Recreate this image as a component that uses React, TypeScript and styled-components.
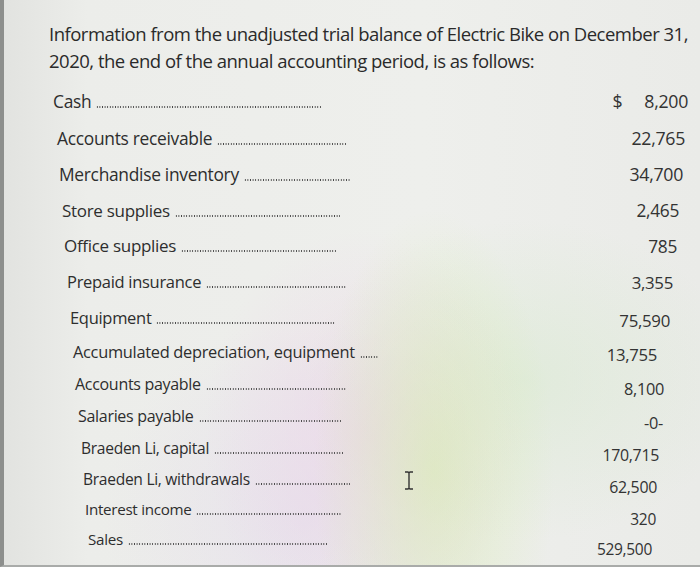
import { FC } from 'react';
import styled, { createGlobalStyle } from 'styled-components';

interface IEntry {
    name: string;
    amount: string;
    indent: number;
    size: number;
    height: number;
    dotsEnd: number;
    right: number;
    drop: number;
    dollar?: boolean;
}

const entries: IEntry[] = [
    { name: 'Cash', amount: '8,200', indent: 53, size: 17.4, height: 37, dotsEnd: 322, right: 688, drop: 0, dollar: true },
    { name: 'Accounts receivable', amount: '22,765', indent: 57, size: 17.4, height: 37, dotsEnd: 346, right: 685, drop: 0 },
    { name: 'Merchandise inventory', amount: '34,700', indent: 59, size: 17.4, height: 36, dotsEnd: 350, right: 683, drop: 0 },
    { name: 'Store supplies', amount: '2,465', indent: 62, size: 17, height: 36, dotsEnd: 340, right: 679, drop: 0 },
    { name: 'Office supplies', amount: '785', indent: 64, size: 17, height: 35, dotsEnd: 337, right: 677, drop: 0 },
    { name: 'Prepaid insurance', amount: '3,355', indent: 67, size: 16.5, height: 36, dotsEnd: 346, right: 673, drop: 1 },
    { name: 'Equipment', amount: '75,590', indent: 70, size: 16.5, height: 36, dotsEnd: 335, right: 670, drop: 3 },
    { name: 'Accumulated depreciation, equipment', amount: '13,755', indent: 73, size: 16.4, height: 33, dotsEnd: 379, right: 657, drop: 3 },
    { name: 'Accounts payable', amount: '8,100', indent: 75, size: 16, height: 31, dotsEnd: 346, right: 664, drop: 5 },
    { name: 'Salaries payable', amount: '-0-', indent: 78, size: 16, height: 33, dotsEnd: 341, right: 663, drop: 7 },
    { name: 'Braeden Li, capital', amount: '170,715', indent: 81, size: 15.6, height: 32, dotsEnd: 343, right: 659, drop: 7 },
    { name: 'Braeden Li, withdrawals', amount: '62,500', indent: 83, size: 15.6, height: 30, dotsEnd: 350, right: 657, drop: 8 },
    { name: 'Interest income', amount: '320', indent: 85, size: 15.2, height: 30, dotsEnd: 342, right: 656, drop: 10 },
    { name: 'Sales', amount: '529,500', indent: 88, size: 15.2, height: 30, dotsEnd: 327, right: 652, drop: 10 },
];

const App: FC = () => {
    return (
        <>
            <GlobalStyle />
            <Screen>
                <Intro>
                    Information from the unadjusted trial balance of Electric Bike on December 31,
                    <br />
                    2020, the end of the annual accounting period, is as follows:
                </Intro>
                <List>
                    {entries.map((e) => (
                        <Row key={e.name} $indent={e.indent} $height={e.height} $size={e.size}>
                            <Label $width={e.dotsEnd - e.indent}>
                                <Name>{e.name}</Name>
                                <Leader />
                            </Label>
                            <Amount $right={700 - e.right} $drop={e.drop}>
                                {e.dollar && <Dollar>$</Dollar>}
                                {e.amount}
                            </Amount>
                        </Row>
                    ))}
                </List>
                <Cursor width="10" height="19" viewBox="0 0 10 19">
                    <path d="M1 1h3l1 1 1-1h3M5 2v15M1 18h3l1-1 1 1h3" fill="none" stroke="#333" strokeWidth="1.4" />
                </Cursor>
            </Screen>
        </>
    );
}

const GlobalStyle = createGlobalStyle`
    body {
        margin: 0;
        font-family: "Open Sans", "Noto Sans", sans-serif;
        color: #2e2e2e;
    }
`

const Screen = styled.div`
    position: relative;
    width: 700px;
    height: 567px;
    box-sizing: border-box;
    overflow: hidden;
    border-left: 4px solid #8d8f8d;
    border-bottom: 2px solid #a9aba9;
    background:
        radial-gradient(ellipse 120px 260px at 430px 470px, rgba(214, 236, 170, 0.55), transparent),
        radial-gradient(ellipse 160px 200px at 360px 430px, rgba(236, 208, 232, 0.55), transparent),
        radial-gradient(ellipse 220px 160px at 520px 380px, rgba(210, 232, 200, 0.45), transparent),
        radial-gradient(ellipse 200px 200px at 300px 520px, rgba(226, 214, 236, 0.5), transparent),
        linear-gradient(90deg, #e2e3e0 0%, #ecedea 12%, #eeefec 60%, #eaebe8 100%);
`

const Intro = styled.p`
    margin: 0;
    padding: 20px 0 0 45px;
    font-size: 18.5px;
    line-height: 27px;
    letter-spacing: -0.5px;
    white-space: nowrap;
    color: #2a2a2a;
`

const List = styled.div`
    display: flex;
    flex-direction: column;
    padding-top: 8px;
`

const Row = styled.div<{ $indent: number; $height: number; $size: number }>`
    display: flex;
    align-items: center;
    height: ${(p) => p.$height}px;
    padding-left: ${(p) => p.$indent - 4}px;
    font-size: ${(p) => p.$size}px;
    letter-spacing: -0.3px;
`

const Label = styled.div<{ $width: number }>`
    display: flex;
    align-items: baseline;
    width: ${(p) => p.$width}px;
    flex: none;
`

const Name = styled.span`
    flex: none;
    white-space: nowrap;
    color: #2e2e2e;
`

const Leader = styled.span`
    flex: 1;
    height: 2px;
    margin-left: 5px;
    background-image: radial-gradient(circle, #444 0.7px, transparent 1px);
    background-size: 2.6px 2px;
    background-repeat: repeat-x;
`

const Amount = styled.div<{ $right: number; $drop: number }>`
    margin-left: auto;
    margin-right: ${(p) => p.$right}px;
    transform: translateY(${(p) => p.$drop}px);
    white-space: nowrap;
    font-size: 1.02em;
    color: #333;
`

const Dollar = styled.span`
    margin-right: 22px;
`

const Cursor = styled.svg`
    position: absolute;
    left: 400px;
    top: 471px;
`

export default App;
